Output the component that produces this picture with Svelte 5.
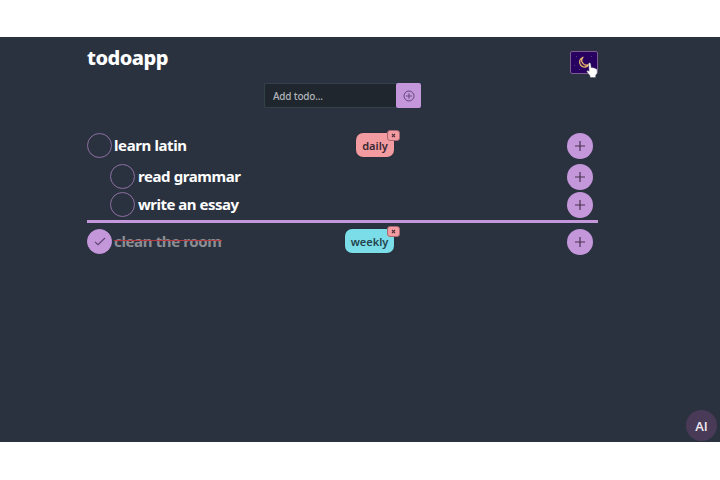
<script>
  const todos = [
    { text: 'learn latin', tag: 'daily', w: 73 },
    { text: 'read grammar', child: true, w: 103 },
    { text: 'write an essay', child: true, last: true, w: 101 },
    { text: 'clean the room', tag: 'weekly', done: true, w: 108 }
  ];
</script>

<div class="page">
  <main>
    <header>
      <h1>todoapp</h1>
      <button class="theme" aria-label="Toggle theme">
        <svg width="28" height="23" viewBox="0 0 28 23">
          <g fill="#5c3a86">
            <rect x="6" y="5" width="1" height="1" /><rect x="21" y="5" width="1" height="1" />
            <rect x="4" y="14" width="1" height="1" /><rect x="9" y="18" width="1" height="1" />
          </g>
          <path d="M13 6.3A5 5 0 1 0 19 13.4A4.7 4.7 0 0 1 13 6.3Z" fill="#3a1550" stroke="#e3b070" stroke-width="1.3" stroke-linejoin="round" />
        </svg>
      </button>
      <svg class="cursor" width="12" height="17" viewBox="0 0 12 17">
        <path d="M2.6 1.4Q3.8.2 4.7 1.6L5.2 5.5L7.4 5.7L9.6 6.4L11.2 7.5V11.2L9.7 13.3V15.6H4V13.8L.8 9.8Q.6 8.4 2 8.5L3.1 9.3Z" fill="#fff" stroke="#4a4660" stroke-width=".5" />
      </svg>
    </header>
    <form>
      <input placeholder="Add todo..." />
      <button type="button" class="submit" aria-label="Add">
        <svg width="12" height="12" viewBox="0 0 12 12" fill="none" stroke="#64467c" stroke-width="1"><circle cx="6" cy="6" r="5" /><path d="M6 3.3V8.7M3.3 6H8.7" /></svg>
      </button>
    </form>
    <div class="list">
      {#each todos as t}
        <div class="row" class:child={t.child} class:last={t.last} class:done={t.done}>
          <span class="check">
            {#if t.done}
              <svg width="12" height="9" viewBox="0 0 12 9"><path d="M1 4.8L4 7.7L11 1" fill="none" stroke="#5c4370" stroke-width="1.1" /></svg>
            {/if}
          </span>
          <span class="label" style:width="{t.w}px">
            <svg width={t.w} height="24"><text x="0" y="16.5" textLength={t.w}>{t.text}</text></svg>
            {#if t.done}<span class="strike"></span>{/if}
          </span>
          <span class="space"></span>
          {#if t.tag}
            <span class="tag {t.tag}">{t.tag}
              <span class="remove"><svg width="5" height="5" viewBox="0 0 5 5"><path d="M1 1L4 4M4 1L1 4" stroke="#51303c" stroke-width="1.1" /></svg></span>
            </span>
          {/if}
          <button class="plus" aria-label="Add subtask">
            <svg width="12" height="12" viewBox="0 0 12 12"><path d="M6 1V11M1 6H11" stroke="#49334f" stroke-width="1.2" /></svg>
          </button>
        </div>
        {#if t.last}<div class="rule"></div>{/if}
      {/each}
    </div>
  </main>
  <span class="ai">AI</span>
</div>

<style>
  :global(body) { background: #fff; }
  * { box-sizing: border-box; }
  .page {
    display: flow-root; position: relative; width: 720px; height: 405px; margin-top: 37px;
    background: #2b323f; overflow: hidden;
    font-family: "Noto Sans", "Open Sans", sans-serif;
  }
  button { padding: 0; border: 0; display: flex; align-items: center; justify-content: center; }
  main { width: 511px; margin-left: 87px; }
  header { position: relative; display: flex; justify-content: space-between; height: 46px; }
  h1 { margin: 7px 0 0; font-size: 20px; line-height: 28px; font-weight: 800; color: #fff; letter-spacing: -0.5px; }
  .theme { margin-top: 14px; width: 28px; height: 23px; background: #28005f; border: 1px solid #7c5c92; border-radius: 2px; }
  .theme svg { flex: none; }
  .cursor { position: absolute; left: 499px; top: 25px; }
  form { display: flex; width: 157px; height: 25px; margin-left: 177px; }
  input {
    width: 132px; height: 25px; padding: 0 8px; background: #1f262e; border: 1px solid #35414a; border-right: 0;
    border-radius: 2px 0 0 2px; color: #fff; font: 500 10px "Noto Sans", sans-serif; letter-spacing: -0.2px;
  }
  input::placeholder { color: #b0b4b8; opacity: 1; }
  .submit { width: 25px; height: 25px; background: #c497db; border-radius: 2px; }
  .list { margin-top: 25px; }
  .row { display: flex; align-items: center; height: 26px; }
  .child { padding-left: 23px; margin-top: 5px; }
  .last { margin-top: 2px; }
  .done { margin-top: 6px; }
  .check {
    flex: none; width: 25px; height: 25px; margin-bottom: 1px; border: 1px solid #8d70a2; border-radius: 50%;
    display: flex; align-items: center; justify-content: center;
  }
  .done .check { background: #c497db; border-color: #c497db; }
  .label { position: relative; flex: none; height: 24px; margin-left: 2px; font-size: 15px; font-weight: 700; }
  .label svg { display: block; overflow: visible; fill: #fff; }
  .child .label { margin-left: 3px; }
  .done .label svg { fill: #8b8f94; }
  .strike { position: absolute; left: 0; right: 0; top: 10px; height: 1px; background: #b83a42; }
  .space { flex: 1; }
  .tag {
    position: relative; flex: none; height: 24px; margin: 0 173px 2px 0; border-radius: 7px;
    display: flex; align-items: center; justify-content: center;
    font-size: 11px; font-weight: 600; color: #382732; box-shadow: 0 0 1px #171d25;
  }
  .daily { width: 38px; background: #f29ba1; }
  .weekly { width: 49px; background: #7bdde8; color: #24434d; }
  .remove {
    position: absolute; right: -6px; top: -3px; width: 13px; height: 11px; border: 1px solid #a56872;
    border-radius: 3px; background: #f29ba1; display: flex; align-items: center; justify-content: center;
  }
  .plus { flex: none; width: 26px; height: 26px; margin-right: 5px; border-radius: 50%; background: #c497db; }
  .rule { height: 3px; margin-top: 2px; background: #c497db; }
  .ai {
    position: absolute; left: 686px; top: 373px; width: 31px; height: 31px; border-radius: 50%;
    background: #493a58; color: #efeaf2; font-family: "Open Sans", sans-serif; font-size: 13px; font-weight: 600;
    display: flex; align-items: center; justify-content: center;
  }
</style>
